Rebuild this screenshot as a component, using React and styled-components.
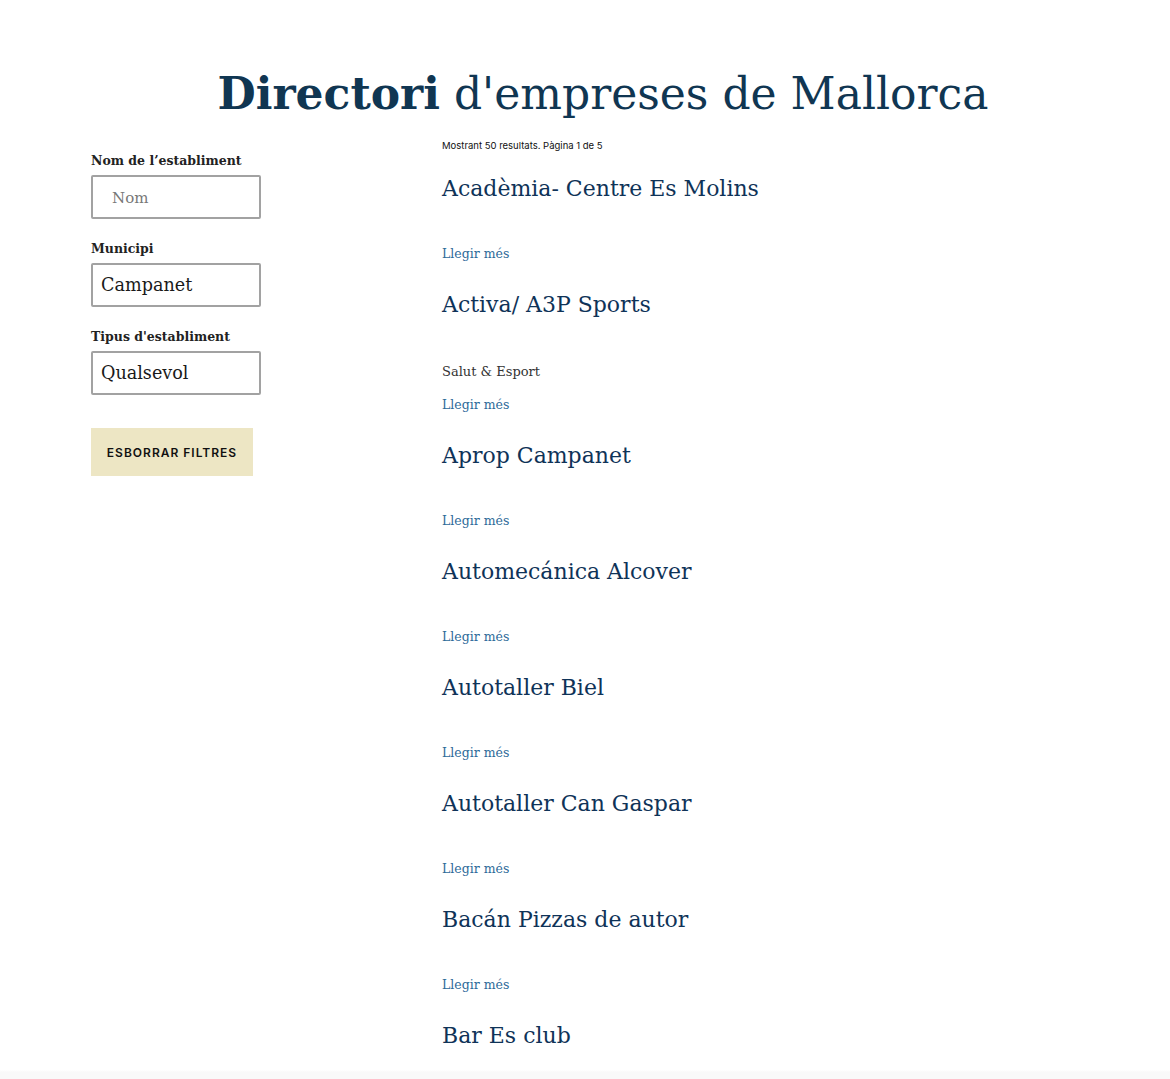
import styled, { createGlobalStyle } from 'styled-components';

const NAVY = '#103652';
const HEAD = '#0f3358';
const LINK = '#2d6a99';
const SLAB = '"DejaVu Serif", "Liberation Serif", serif';
const SANS = 'Inter, Roboto, "Liberation Sans", sans-serif';

const GlobalStyle = createGlobalStyle`
  html, body {
    margin: 0;
    padding: 0;
    background: #ffffff;
  }
  body {
    font-family: ${SLAB};
    color: #222;
  }
  * { box-sizing: border-box; }
`;

const businesses = [
  { name: 'Acadèmia- Centre Es Molins' },
  { name: 'Activa/ A3P Sports', category: 'Salut & Esport' },
  { name: 'Aprop Campanet' },
  { name: 'Automecánica Alcover' },
  { name: 'Autotaller Biel' },
  { name: 'Autotaller Can Gaspar' },
  { name: 'Bacán Pizzas de autor' },
  { name: 'Bar Es club' },
];

export default function App() {
  return (
    <>
      <GlobalStyle />
      <StyledPage>
        <StyledTitle>
          <strong>Directori</strong> d'empreses de Mallorca
        </StyledTitle>
        <StyledLayout>
          <StyledFilters>
            <StyledField>
              <StyledLabel>Nom de l’establiment</StyledLabel>
              <StyledInput placeholder="Nom" $indent />
            </StyledField>
            <StyledField>
              <StyledLabel>Municipi</StyledLabel>
              <StyledInput defaultValue="Campanet" />
            </StyledField>
            <StyledField>
              <StyledLabel>Tipus d'establiment</StyledLabel>
              <StyledInput defaultValue="Qualsevol" />
            </StyledField>
            <StyledButton>Esborrar filtres</StyledButton>
          </StyledFilters>
          <StyledResults>
            <StyledCount>Mostrant 50 resultats. Pàgina 1 de 5</StyledCount>
            {businesses.map((b, i) => (
              <StyledItem key={b.name}>
                <h2>{b.name}</h2>
                {b.category && <StyledCategory>{b.category}</StyledCategory>}
                {i < businesses.length - 1 && <StyledLink href="#">Llegir més</StyledLink>}
              </StyledItem>
            ))}
          </StyledResults>
        </StyledLayout>
      </StyledPage>
    </>
  );
}

const StyledPage = styled.main`
  width: 100%;
  height: 1079px;
  overflow: hidden;
  padding-top: 62px;
  background: linear-gradient(to bottom, #fff 0, #fff 1070px, #f9f9f9 1072px);
`;

const StyledTitle = styled.h1`
  margin: 0;
  padding-left: 36px;
  text-align: center;
  font-family: ${SLAB};
  font-weight: 300;
  font-size: 44px;
  line-height: 64px;
  color: ${NAVY};

  strong {
    font-weight: 700;
  }
`;

const StyledLayout = styled.div`
  display: grid;
  grid-template-columns: 351px 1fr;
  padding-left: 91px;
`;

const StyledFilters = styled.aside`
  display: flex;
  flex-direction: column;
  padding-top: 25px;
`;

const StyledField = styled.div`
  display: flex;
  flex-direction: column;
  margin-bottom: 20px;
`;

const StyledLabel = styled.label`
  font-family: ${SLAB};
  font-weight: 700;
  font-size: 12.5px;
  line-height: 20px;
  color: #222;
  margin-bottom: 4px;
`;

const StyledInput = styled.input`
  width: 170px;
  height: 44px;
  border: 2px solid #a2a2a2;
  border-radius: 2px;
  padding: 0 0 0 ${(p) => (p.$indent ? '19px' : '8px')};
  font-family: ${SLAB};
  font-size: 17.6px;
  color: #1a1a1a;
  outline: none;

  &::placeholder {
    color: #777;
    font-size: 15px;
  }
`;

const StyledButton = styled.button`
  align-self: flex-start;
  margin-top: 13px;
  width: 162px;
  height: 48px;
  border: none;
  background: #ede6c4;
  font-family: ${SANS};
  font-weight: 600;
  font-size: 12px;
  letter-spacing: 1px;
  text-transform: uppercase;
  color: #111;
`;

const StyledResults = styled.section`
  display: flex;
  flex-direction: column;
  padding-top: 13px;
`;

const StyledCount = styled.p`
  margin: 0 0 21px;
  font-family: ${SANS};
  font-size: 9.5px;
  line-height: 14px;
  color: #111;
`;

const StyledItem = styled.article`
  display: flex;
  flex-direction: column;
  align-items: flex-start;
  margin-bottom: 26px;

  h2 {
    margin: 0 0 40px;
    font-family: ${SLAB};
    font-weight: 400;
    font-size: 22px;
    line-height: 30px;
    color: ${HEAD};
  }
`;

const StyledCategory = styled.p`
  margin: 2px 0 13px;
  font-family: ${SLAB};
  font-size: 13px;
  line-height: 20px;
  color: #333;
`;

const StyledLink = styled.a`
  font-family: ${SLAB};
  font-size: 12.5px;
  line-height: 20px;
  color: ${LINK};
  text-decoration: none;
`;
